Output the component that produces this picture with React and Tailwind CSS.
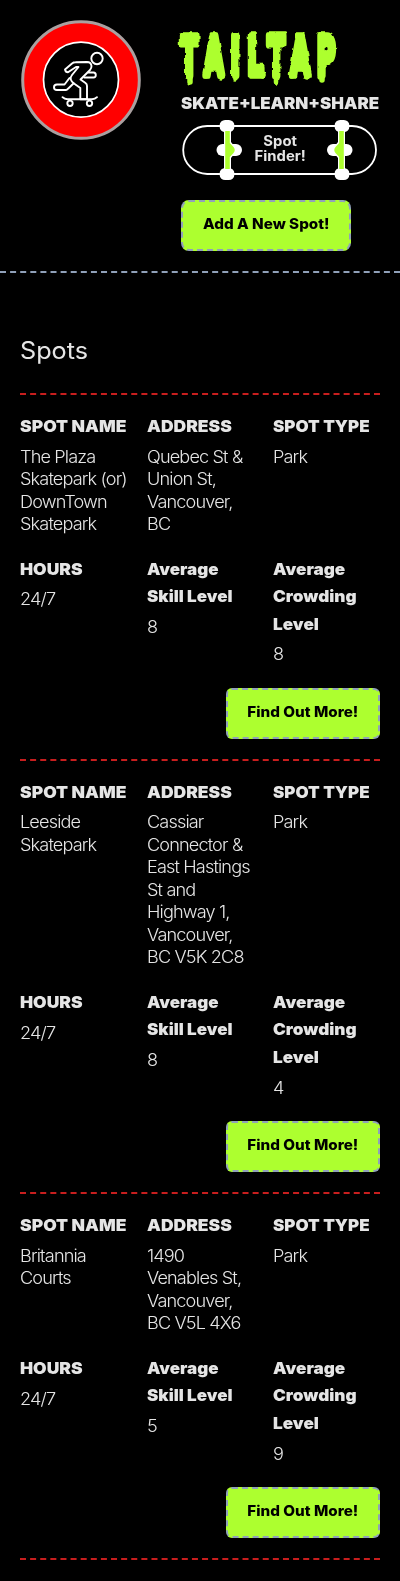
const spots = [
  { name: ['The Plaza', 'Skatepark (or)', 'DownTown', 'Skatepark'], address: ['Quebec St &', 'Union St,', 'Vancouver,', 'BC'], skill: '8', crowd: '8' },
  { name: ['Leeside', 'Skatepark'], address: ['Cassiar', 'Connector &', 'East Hastings', 'St and', 'Highway 1,', 'Vancouver,', 'BC V5K 2C8'], skill: '8', crowd: '4' },
  { name: ['Britannia', 'Courts'], address: ['1490', 'Venables St,', 'Vancouver,', 'BC V5L 4X6'], skill: '5', crowd: '9' },
];

function Logo() {
  return (
    <svg className="block h-[120px] w-[120px]" viewBox="21 20 120 120" fill="none" strokeLinecap="round" strokeLinejoin="round">
      <circle cx="81" cy="80" r="58.3" fill="#ff0000" stroke="#aaa0a0" strokeWidth="3" />
      <circle cx="81" cy="79.7" r="37.5" fill="#000" stroke="#fff" strokeWidth="1.7" />
      <g stroke="#fff" strokeWidth="1.9">
        <circle cx="97" cy="58.5" r="5.7" />
        <path d="M65 69.5 L72 63.5 Q73.5 62.3 75.5 62.3 L87 62 Q91 62 91.5 66 Q91.6 68 90 70 L80.5 79.5 L85.5 83 Q87 84 87 86 V99.3 H80.3 V88 L74 83.5 Q68.5 79.5 72 75 L78.5 67 L76 67 L68 72.3 Q65.5 72.3 65 69.5Z" />
        <path d="M88.5 72.5 H93.5 Q95.8 72.7 95.8 75 Q95.8 77.5 93.5 77.5 H84.3" />
        <path d="M69.5 78 L64.5 84.5 H57 Q54 84.6 54 87.2 Q54 90 57 90 H66 Q67 90 68 88.7 L73.7 83.3" />
        <path d="M62.5 97.2 Q64.5 99.3 67.5 99.3 H92 Q95 99.3 97 97.2" />
        <circle cx="70" cy="103.3" r="2.7" />
        <circle cx="89.5" cy="103.3" r="2.7" />
      </g>
    </svg>
  );
}

function Title() {
  return (
    <svg className="block h-[64px] w-[200px] overflow-visible" viewBox="175 26 200 64" fill="#adff2f" stroke="#adff2f">
      <filter id="rough" x="-5%" y="-10%" width="110%" height="120%">
        <feTurbulence type="fractalNoise" baseFrequency="0.17" numOctaves="1" seed="4" />
        <feDisplacementMap in="SourceGraphic" scale="3.5" xChannelSelector="R" yChannelSelector="G" />
      </filter>
      <g filter="url(#rough)">
        <g transform="translate(0.5 75) scale(.48 1)">
          <text x="375 424 479 514 556 604 659" y="0" fontFamily="DejaVu Sans" fontWeight="700" fontSize="53" strokeWidth="7.5" strokeLinejoin="round">TAILTAP</text>
        </g>
        <path strokeWidth="5.5" strokeLinecap="round" d="M190 72V82M206 74V76M221 74V77M235 74V79M251 74V75M263 74V76M276.500 72V82M292 74V76M308 74V77M322 72V80" />
      </g>
    </svg>
  );
}

function Truck({ x, flip }) {
  return (
    <g transform={flip ? `translate(${x} 0) scale(-1 1)` : `translate(${x} 0)`}>
      <rect x="-7.4" y="120" width="14.8" height="12" rx="5.5" fill="#fff" />
      <rect x="-7.4" y="168" width="14.8" height="12" rx="5.5" fill="#fff" />
      <rect x="-10.5" y="144" width="25.5" height="12" rx="6" fill="#fff" />
      <path d="M-3 131H4V142L8 147V153L4 158V169H-3Z" fill="#fff" />
      <path d="M-1.8 131H2.8V143L6.5 147Q9 150 6.5 153L2.8 157V169H-1.8Z" fill="#adff2f" />
    </g>
  );
}

function SpotFinder() {
  return (
    <div className="relative h-[60px] w-[195px]">
      <svg className="absolute inset-0 h-[60px] w-[195px]" viewBox="182 120 195 60">
        <rect x="183.2" y="126" width="192.800" height="48" rx="24" fill="#000" stroke="#fff" strokeWidth="1.8" />
        <Truck x={227} />
        <Truck x={342} flip />
      </svg>
      <div className="relative flex h-[56px] items-center justify-center pl-[2px] text-center text-[14px] leading-[15px] font-bold">
        <span className="inline-block scale-x-[1.06]">Spot<br />Finder!</span>
      </div>
    </div>
  );
}

function Label({ children, className = 'scale-x-[1.06]' }) {
  return <h3 className={`relative top-[0.7px] origin-left text-[16.5px] leading-[27.5px] font-black whitespace-nowrap ${className}`}>{children}</h3>;
}

function Lines({ lines }) {
  return (
    <p className="mt-[6px] origin-left scale-x-[1.065] text-[17px] leading-[22.5px] font-light tracking-[-0.8px] whitespace-nowrap">
      {lines.map((line) => <span key={line} className="block">{line}</span>)}
    </p>
  );
}

function Spot({ spot }) {
  return (
    <article className="border-t-2 border-dashed border-[#c81e1e] pt-[17px] pb-[20px]">
      <div className="grid grid-cols-3 gap-x-5">
        <div><Label>SPOT NAME</Label><Lines lines={spot.name} /></div>
        <div><Label>ADDRESS</Label><Lines lines={spot.address} /></div>
        <div><Label className="scale-x-[1.03]">SPOT TYPE</Label><Lines lines={['Park']} /></div>
      </div>
      <div className="mt-[19.4px] grid grid-cols-3 gap-x-5">
        <div><Label>HOURS</Label><Lines lines={['24/7']} /></div>
        <div><Label className="scale-x-[1.03]">Average<br />Skill Level</Label><Lines lines={[spot.skill]} /></div>
        <div><Label className="scale-x-[1.04]">Average<br />Crowding<br />Level</Label><Lines lines={[spot.crowd]} /></div>
      </div>
      <div className="mt-[22px] flex justify-end">
        <button className="h-[51px] w-[154px] rounded-md border-2 border-dashed border-slate-400 bg-[#adff2f] pb-[3px] text-[14.5px] font-extrabold whitespace-nowrap text-black"><span className="inline-block scale-x-[1.05]">Find Out More!</span></button>
      </div>
    </article>
  );
}

export default function App() {
  return (
    <div className="h-[1581px] overflow-hidden bg-black font-['Inter',sans-serif] text-neutral-200">
      <header className="flex h-[273px] border-b-2 border-dashed border-slate-400 pt-5 pl-[21px]">
        <Logo />
        <div className="ml-[34px] pt-[6px]">
          <Title />
          <p className="ml-[6px] h-[30px] w-[190px] origin-left scale-x-[1.025] text-[16.5px] leading-[27px] font-black whitespace-nowrap">SKATE+LEARN+SHARE</p>
          <div className="ml-[7px]"><SpotFinder /></div>
          <button className="mt-5 ml-[6px] h-[51px] w-[170px] rounded-lg border-2 border-dashed border-slate-400 bg-[#adff2f] pb-[3px] text-[14.5px] font-extrabold whitespace-nowrap text-black"><span className="inline-block scale-x-[1.05]">Add A New Spot!</span></button>
        </div>
      </header>
      <main className="px-5">
        <h2 className="h-[120px] origin-left scale-x-[1.05] pt-[62px] text-[24px] leading-[32px]">Spots</h2>
        {spots.map((spot) => <Spot key={spot.name[0]} spot={spot} />)}
        <div className="border-t-2 border-dashed border-[#c81e1e]" />
      </main>
    </div>
  );
}
